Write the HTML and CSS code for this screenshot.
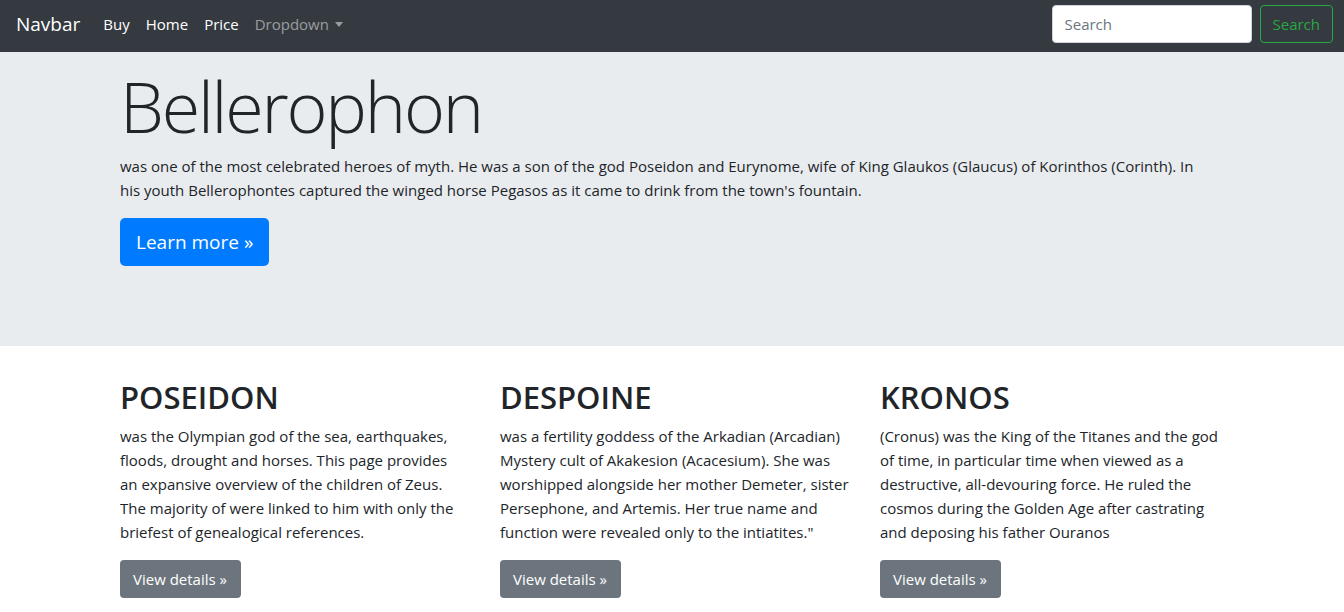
FILE: index.html
```html
<!DOCTYPE html>
<html lang="en">
<head>
<meta charset="utf-8">
<title>Jumbotron</title>
<link rel="stylesheet" href="styles.css">
</head>
<body>
<nav class="navbar">
  <a class="brand" href="#">Navbar</a>
  <ul class="nav">
    <li><a class="nav-link active" href="#">Buy</a></li>
    <li><a class="nav-link active" href="#">Home</a></li>
    <li><a class="nav-link active" href="#">Price</a></li>
    <li><a class="nav-link muted" href="#">Dropdown<span class="caret"></span></a></li>
  </ul>
  <form class="search">
    <input class="search-input" type="text" placeholder="Search">
    <button class="search-btn" type="button">Search</button>
  </form>
</nav>
<main>
  <div class="jumbotron">
    <div class="container">
      <h1 class="display">Bellerophon</h1>
      <p class="lead-text">was one of the most celebrated heroes of myth. He was a son of the god Poseidon and Eurynome, wife of King Glaukos (Glaucus) of Korinthos (Corinth). In<br>his youth Bellerophontes captured the winged horse Pegasos as it came to drink from the town's fountain.</p>
      <p><a class="btn btn-primary btn-lg" href="#">Learn more &raquo;</a></p>
    </div>
  </div>
  <div class="container">
    <div class="row">
      <div class="col">
        <h2>POSEIDON</h2>
        <p>was the Olympian god of the sea, earthquakes, floods, drought and horses. This page provides<br>an expansive overview of the children of Zeus. The majority of were linked to him with only the briefest of genealogical references.</p>
        <p><a class="btn btn-secondary" href="#">View details &raquo;</a></p>
      </div>
      <div class="col">
        <h2>DESPOINE</h2>
        <p>was a fertility goddess of the Arkadian (Arcadian) Mystery cult of Akakesion (Acacesium). She was worshipped alongside her mother Demeter, sister Persephone, and Artemis. Her true name and function were revealed only to the intiatites."</p>
        <p><a class="btn btn-secondary" href="#">View details &raquo;</a></p>
      </div>
      <div class="col">
        <h2>KRONOS</h2>
        <p>(Cronus) was the King of the Titanes and the god of time, in particular time when viewed as a destructive, all-devouring force. He ruled the cosmos during the Golden Age after castrating and deposing his father Ouranos</p>
        <p><a class="btn btn-secondary" href="#">View details &raquo;</a></p>
      </div>
    </div>
  </div>
</main>
</body>
</html>
```
FILE: styles.css
```css
* { box-sizing: border-box; }
html, body { margin: 0; padding: 0; }
body {
  font-family: "Open Sans", "Noto Sans", sans-serif;
  font-size: 15px;
  line-height: 24px;
  color: #212529;
  background: #fff;
  overflow: hidden;
}
a { text-decoration: none; }
p { margin: 0 0 16px; }

.navbar {
  height: 52px;
  background: #343a40;
  display: flex;
  align-items: center;
  padding: 0 11px 4px 16px;
}
.brand {
  color: #fff;
  font-size: 19px;
  line-height: 30px;
  margin-right: 15px;
}
.nav {
  list-style: none;
  margin: 0;
  padding: 0;
  display: flex;
  flex: 1;
}
.nav-link {
  display: block;
  padding: 8px 8px;
  font-size: 15px;
  line-height: 24px;
}
.nav-link.active { color: #fff; }
.nav-link.muted { color: rgba(255,255,255,.5); }
.caret {
  display: inline-block;
  width: 0; height: 0;
  margin-left: 6px;
  vertical-align: 3px;
  border-top: 5px solid rgba(255,255,255,.5);
  border-left: 4.5px solid transparent;
  border-right: 4.5px solid transparent;
}
.search { display: flex; align-items: center; }
.search-input {
  width: 200px;
  height: 38px;
  padding: 6px 12px;
  border: 1px solid #ced4da;
  border-radius: 4px;
  font: inherit;
  font-size: 15px;
  color: #495057;
  margin-right: 8px;
  background: #fff;
}
.search-input::placeholder { color: #6c757d; }
.search-btn {
  height: 38px;
  padding: 6px 12px;
  background: transparent;
  color: #28a745;
  border: 1px solid #28a745;
  border-radius: 4px;
  font: inherit;
  font-size: 15px;
}

.jumbotron {
  background: #e9ecef;
  padding: 8px 0 64px;
  margin-bottom: 32px;
}
.container {
  width: 1140px;
  margin: 0 auto;
  padding: 0 12px 0 18px;
}
.display {
  font-size: 70px;
  font-weight: 300;
  line-height: 86px;
  margin: 0 0 8px;
  letter-spacing: -2.2px;
  position: relative;
  top: 3px;
}
.btn {
  display: inline-block;
  color: #fff;
  border-radius: 4px;
  font-size: 15px;
  line-height: 24px;
  padding: 7px 14px 7px 13px;
}
.btn-lg {
  font-size: 19px;
  line-height: 30px;
  padding: 9px 16px;
  border-radius: 5px;
}
.btn-primary { background: #007bff; }
.btn-secondary { background: #6c757d; }

.row { display: flex; margin: 0 -15px; }
.col { flex: 0 0 380px; padding: 0 15px; }
h2 {
  font-size: 31px;
  font-weight: 600;
  line-height: 38px;
  margin: 0 0 8px;
}
```
